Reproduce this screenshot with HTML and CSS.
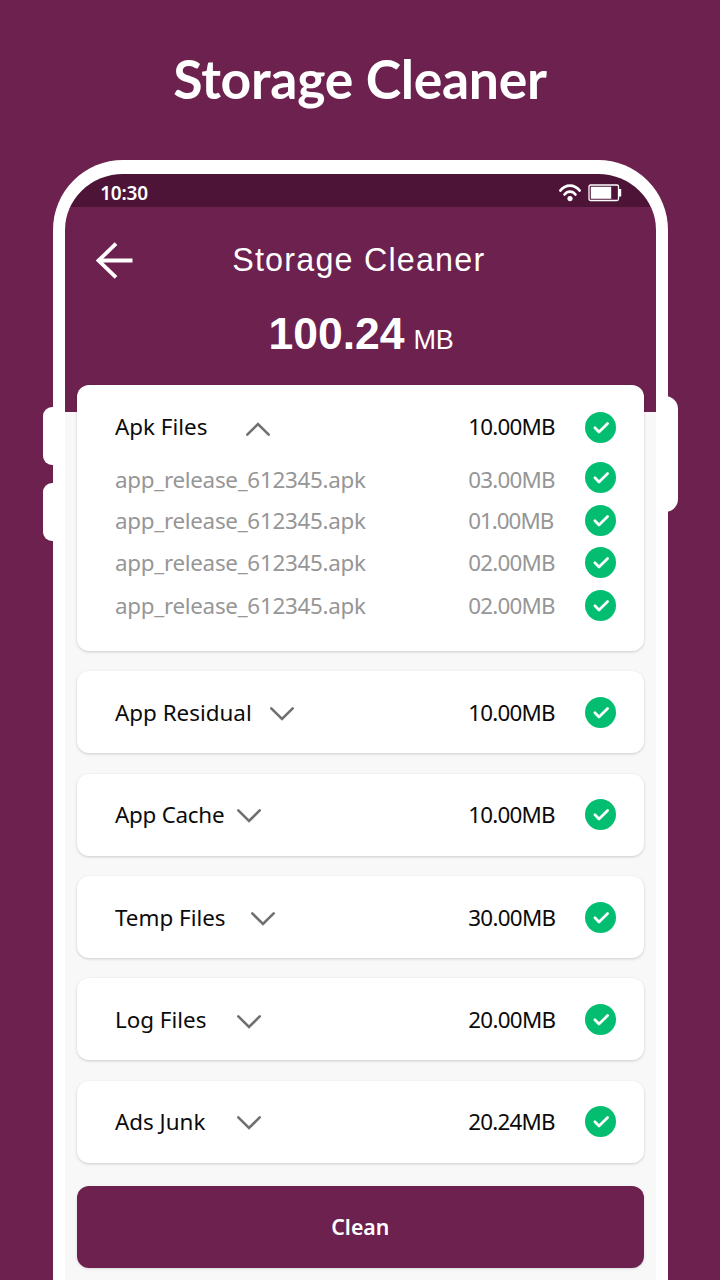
FILE: index.html
```html
<!DOCTYPE html>
<html lang="en">
<head>
<meta charset="utf-8">
<title>Storage Cleaner</title>
<link rel="stylesheet" href="styles.css">
</head>
<body>
<svg class="defs" aria-hidden="true">
  <symbol id="check" viewBox="0 0 31 31"><circle cx="15.5" cy="15.5" r="15.5" fill="#03be70"/><path d="M9.9 15.8 14 20 22.6 11.5" fill="none" stroke="#fff" stroke-width="2.7" stroke-linecap="round" stroke-linejoin="round"/></symbol>
  <symbol id="chevron" viewBox="0 0 24 14"><path d="M1.3 1.4 12 12 22.7 1.4" fill="none" stroke="#707070" stroke-width="2.6" stroke-linecap="round"/></symbol>
</svg>
<main class="page">
  <h1 class="headline">Storage Cleaner</h1>
  <div class="device">
    <i class="key key-up"></i><i class="key key-down"></i><i class="key key-power"></i>
    <div class="phone">
      <div class="status">
        <span class="time">10:30</span>
        <svg class="wifi" viewBox="0 0 24 20"><g fill="none" stroke="#fff" stroke-width="2.6" stroke-linecap="round"><path d="M2.3 7.6C7.6 .9 16.4 .9 21.7 7.6M6.5 11.5C9.6 7.6 14.4 7.6 17.5 11.5"/></g><circle cx="12" cy="15.6" r="2.6" fill="#fff"/></svg>
        <svg class="battery" viewBox="0 0 34 18"><rect x="1" y="1" width="29.5" height="15.5" rx="1.5" fill="none" stroke="#fff" stroke-width="1.3"/><path d="M2.8 2.8h20.4v12H2.8zM31 5h2.2v7.5H31z" fill="#fff"/></svg>
      </div>
      <header class="header">
        <div class="bar">
          <svg class="back" viewBox="0 0 37 37"><path d="M20 1.7 2.6 18.5 20 35.3M2.6 18.5H36.5" fill="none" stroke="#fff" stroke-width="3.8"/></svg>
          <h2 class="title">Storage Cleaner</h2>
        </div>
        <p class="total"><strong>100.24</strong><span>MB</span></p>
      </header>
      <section class="list">
        <article class="card card-open">
          <div class="row"><span class="name apk"><b>Apk Files</b></span><svg class="chev up"><use href="#chevron"/></svg><span class="size">10.00MB</span><svg class="check"><use href="#check"/></svg></div>
          <div class="files">
            <div class="row file first"><span class="filename">app_release_612345.apk</span><span class="size">03.00MB</span><svg class="check"><use href="#check"/></svg></div>
            <div class="row file"><span class="filename">app_release_612345.apk</span><span class="size one">01.00MB</span><svg class="check"><use href="#check"/></svg></div>
            <div class="row file"><span class="filename">app_release_612345.apk</span><span class="size">02.00MB</span><svg class="check"><use href="#check"/></svg></div>
            <div class="row file"><span class="filename">app_release_612345.apk</span><span class="size">02.00MB</span><svg class="check"><use href="#check"/></svg></div>
          </div>
        </article>
        <article class="card row"><span class="name residual"><b>App Residual</b></span><svg class="chev"><use href="#chevron"/></svg><span class="size">10.00MB</span><svg class="check"><use href="#check"/></svg></article>
        <article class="card row"><span class="name cache"><b>App Cache</b></span><svg class="chev"><use href="#chevron"/></svg><span class="size">10.00MB</span><svg class="check"><use href="#check"/></svg></article>
        <article class="card row"><span class="name temp"><b>Temp Files</b></span><svg class="chev"><use href="#chevron"/></svg><span class="size wide">30.00MB</span><svg class="check"><use href="#check"/></svg></article>
        <article class="card row"><span class="name log"><b>Log Files</b></span><svg class="chev low"><use href="#chevron"/></svg><span class="size wide">20.00MB</span><svg class="check"><use href="#check"/></svg></article>
        <article class="card row"><span class="name ads"><b>Ads Junk</b></span><svg class="chev"><use href="#chevron"/></svg><span class="size">20.24MB</span><svg class="check"><use href="#check"/></svg></article>
        <button class="clean">Clean</button>
      </section>
    </div>
  </div>
</main>
</body>
</html>
```
FILE: styles.css
```css
* { box-sizing: border-box; }
body { margin: 0; background: #6d214f; }
h1, h2, p { margin: 0; font-weight: normal; }
svg { display: block; flex: none; }
.defs { position: absolute; width: 0; height: 0; }
.page { height: 1280px; overflow: hidden; font-family: "Noto Sans", sans-serif; }
.headline { height: 160px; padding-top: 43px; text-align: center; color: #fff; font: bold 53.5px/70px Lato, sans-serif; letter-spacing: -.3px; }
.device { position: relative; width: 614.5px; margin-left: 53.2px; }
.key { position: absolute; background: #fff; }
.key-up, .key-down { left: -10.7px; width: 24px; height: 58px; border-radius: 9px; }
.key-up { top: 247px; }
.key-down { top: 323px; }
.key-power { right: -10.5px; top: 236px; width: 26px; height: 115.5px; border-radius: 15px; }
.phone { position: relative; height: 1130px; border: solid #fff; border-width: 14px 12px 0; border-radius: 70px 70px 0 0; background: #f8f8f8; overflow: hidden; }
.status { display: flex; align-items: center; height: 33px; padding: 4px 34px 0 35px; background: #4d1438; color: #fff; }
.time { margin-right: auto; font-size: 19px; font-weight: 600; line-height: 24px; letter-spacing: -.2px; }
.wifi { width: 24px; height: 20px; margin-right: 6px; }
.battery { width: 34px; height: 18px; }
.header { height: 205px; background: #6d214f; color: #fff; }
.bar { display: flex; align-items: center; height: 106px; padding-left: 30.5px; }
.back { width: 37px; height: 37px; }
.title { margin-left: 99.5px; font: 32.3px/40px "Liberation Sans", sans-serif; letter-spacing: 1.2px; }
.total { display: flex; justify-content: center; align-items: baseline; gap: 9px; margin-top: -6px; padding-left: 1px; font-family: "Liberation Sans", sans-serif; line-height: 54px; }
.total strong { font-size: 44.5px; }
.total span { font-size: 27px; letter-spacing: -.3px; }
.list { display: flex; flex-direction: column; gap: 20.4px; margin-top: -27px; padding: 0 12px 0 11.8px; }
.card { height: 82px; border-radius: 12px; background: #fff; box-shadow: 0 1px 3px rgba(0, 0, 0, .18); }
.row { display: flex; align-items: center; padding: 0 28px 0 38px; color: #0b0b0b; font-size: 22.4px; }
.card-open { height: 265.9px; padding-top: 20px; }
.card-open .row { height: 43px; }
.card-open > .row { height: 44px; }
.card-open > .row .name, .card-open > .row .size { padding-bottom: 2px; }
.name b { font-weight: 400; }
.name { white-space: nowrap; }
.apk { width: 131px; }
.residual { width: 155px; }
.cache { letter-spacing: -.25px; }
.cache, .log, .ads { width: 122px; }
.temp { width: 136px; }
.chev { width: 24px; height: 14px; margin-top: 3px; }
.low { margin-top: 5px; }
.up { transform: rotate(180deg); }
.size { width: 88px; margin-left: auto; white-space: nowrap; letter-spacing: -.8px; }
.size.wide { letter-spacing: -.7px; }
.size.one { letter-spacing: -1px; }
.check { width: 31px; height: 31px; margin-left: 28.5px; }
.files { display: grid; grid-auto-rows: 42.4px; padding-top: 7.8px; }
.card-open .file { height: 42.4px; color: #969696; }
.filename { white-space: nowrap; letter-spacing: -.28px; }
.first .filename, .first .size { padding-top: 3px; }
.clean { height: 81.5px; margin-top: 3px; padding: 0; border: 0; border-radius: 12px; background: #6d214f; box-shadow: 0 1px 3px rgba(0, 0, 0, .12); color: #fff; font: 600 21.3px/30px "Noto Sans", sans-serif; }
```
